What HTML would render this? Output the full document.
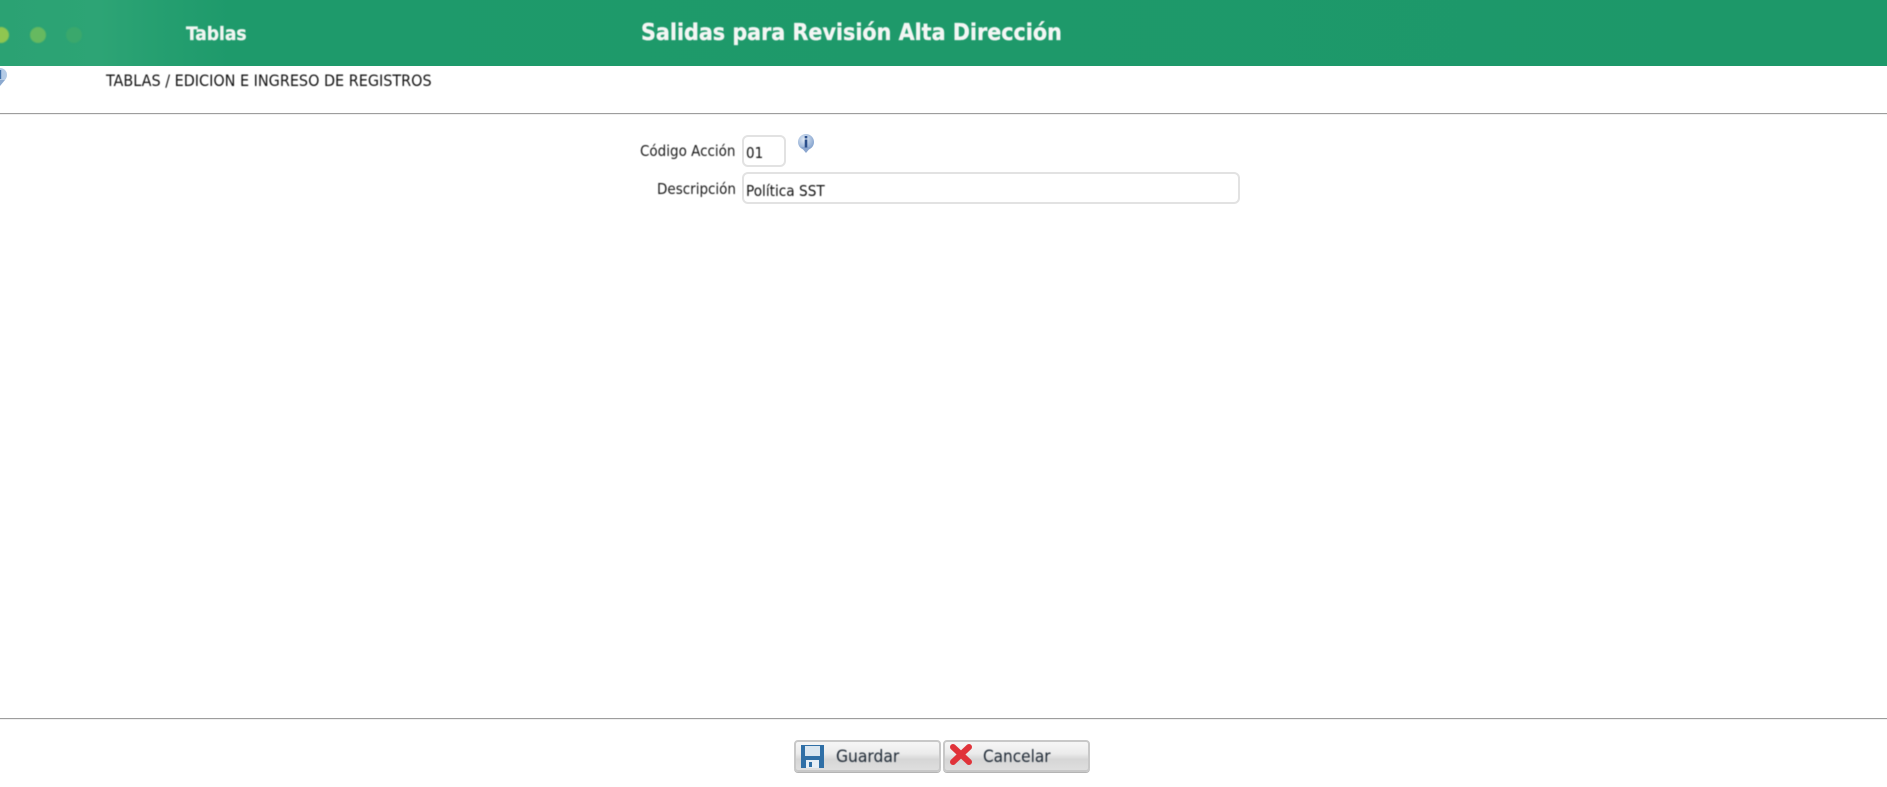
<!DOCTYPE html>
<html lang="es">
<head>
<meta charset="utf-8">
<title>Salidas para Revisión Alta Dirección</title>
<style>
html,body{margin:0;padding:0;width:1887px;height:787px;overflow:hidden;background:#fff;}
body{position:relative;font-family:"DejaVu Sans Condensed","DejaVu Sans","Liberation Sans",sans-serif;color:#111;}
.t{position:absolute;white-space:nowrap;filter:blur(.4px);line-height:1;}
.hdr{position:absolute;left:0;top:0;width:1887px;height:66px;background:linear-gradient(90deg,#2ba273 0,#2da475 100px,#259f70 160px,#1e9a6b 230px,#1d9869 100%);}
.dot{position:absolute;border-radius:50%;filter:blur(.8px);}
.line{position:absolute;left:0;width:1887px;height:1px;background:#9d9d9d;border-bottom:1px solid #f0f0f0;}
.inp{position:absolute;box-sizing:border-box;border:2px solid #e2e2e2;border-radius:6px;background:#fff;}
.btn{position:absolute;box-sizing:border-box;top:740px;width:147px;height:32px;border:2px solid #c8c8c8;border-radius:4px;background:linear-gradient(#f6f6f6 0,#ececec 40%,#d6d6d6 62%,#dedede 100%);box-shadow:0 1px 0 #b4b4b4;}
svg{position:absolute;}
</style>
</head>
<body>
<div class="hdr">
<div class="dot" style="left:-7px;top:27px;width:16px;height:16px;background:#8fc650;"></div>
<div class="dot" style="left:30px;top:27px;width:16px;height:16px;background:#66b960;"></div>
<div class="dot" style="left:66px;top:27px;width:16px;height:16px;background:#3aa86c;"></div>
</div>
<div class="t" style="left:186px;top:25px;font-size:19px;font-weight:bold;color:#f1f6f2;-webkit-text-stroke:.3px #f1f6f2;">Tablas</div>
<div class="t" style="left:641px;top:22px;font-size:23px;font-weight:bold;color:#f4f6f4;-webkit-text-stroke:.35px #f4f6f4;">Salidas para Revisión Alta Dirección</div>

<svg style="left:-8px;top:68px" width="17" height="20" viewBox="0 0 17 20"><circle cx="8" cy="7" r="7" fill="#b4cbe6"/><path d="M3 12 L8 18 L13 12Z" fill="#8ba9cf"/><rect x="6.6" y="2" width="2.6" height="9" fill="#3d6ea8"/></svg>
<div class="t" style="left:106px;top:73px;font-size:16px;color:#111;">TABLAS / EDICION E INGRESO DE REGISTROS</div>
<div class="line" style="top:113px;"></div>

<div class="t" style="left:640px;top:144px;font-size:15px;color:#1a1a1a;">Código Acción</div>
<div class="inp" style="left:742px;top:135px;width:44px;height:32px;"></div>
<div class="t" style="left:746px;top:146px;font-size:15px;color:#111;">01</div>
<svg style="left:796px;top:134px" width="20" height="20" viewBox="0 0 20 20"><defs><radialGradient id="g" cx=".4" cy=".35" r=".7"><stop offset="0" stop-color="#e4edf7"/><stop offset="1" stop-color="#7f9fcc"/></radialGradient></defs><circle cx="10" cy="8" r="8" fill="url(#g)"/><path d="M5 13 L10 19 L15 13Z" fill="#8ba6cf"/><rect x="8.7" y="2" width="2.6" height="2.4" fill="#2b4f8c"/><rect x="8.7" y="5.5" width="2.6" height="8" fill="#2b4f8c"/></svg>

<div class="t" style="left:657px;top:182px;font-size:15px;color:#1a1a1a;">Descripción</div>
<div class="inp" style="left:742px;top:172px;width:498px;height:32px;"></div>
<div class="t" style="left:746px;top:184px;font-size:15.2px;color:#111;">Política SST</div>

<div class="line" style="top:718px;"></div>

<div class="btn" style="left:794px;"></div>
<svg style="left:800px;top:744px" width="25" height="25" viewBox="0 0 25 25"><path d="M1 1H24V24H1Z" fill="#2f6fa6"/><rect x="5" y="2" width="15" height="10" fill="#d9e6f0"/><rect x="6" y="16" width="13" height="8" fill="#e6eef5"/><rect x="9" y="18" width="3" height="5" fill="#2f6fa6"/></svg>
<div class="t" style="left:836px;top:749px;font-size:17.3px;color:#1f2a36;">Guardar</div>

<div class="btn" style="left:943px;"></div>
<svg style="left:950px;top:744px" width="22" height="21" viewBox="0 0 22 21"><path d="M3 3 L19 18 M19 3 L3 18" stroke="#e0333a" stroke-width="6" stroke-linecap="round"/></svg>
<div class="t" style="left:983px;top:749px;font-size:17px;color:#1f2a36;">Cancelar</div>
</body>
</html>
